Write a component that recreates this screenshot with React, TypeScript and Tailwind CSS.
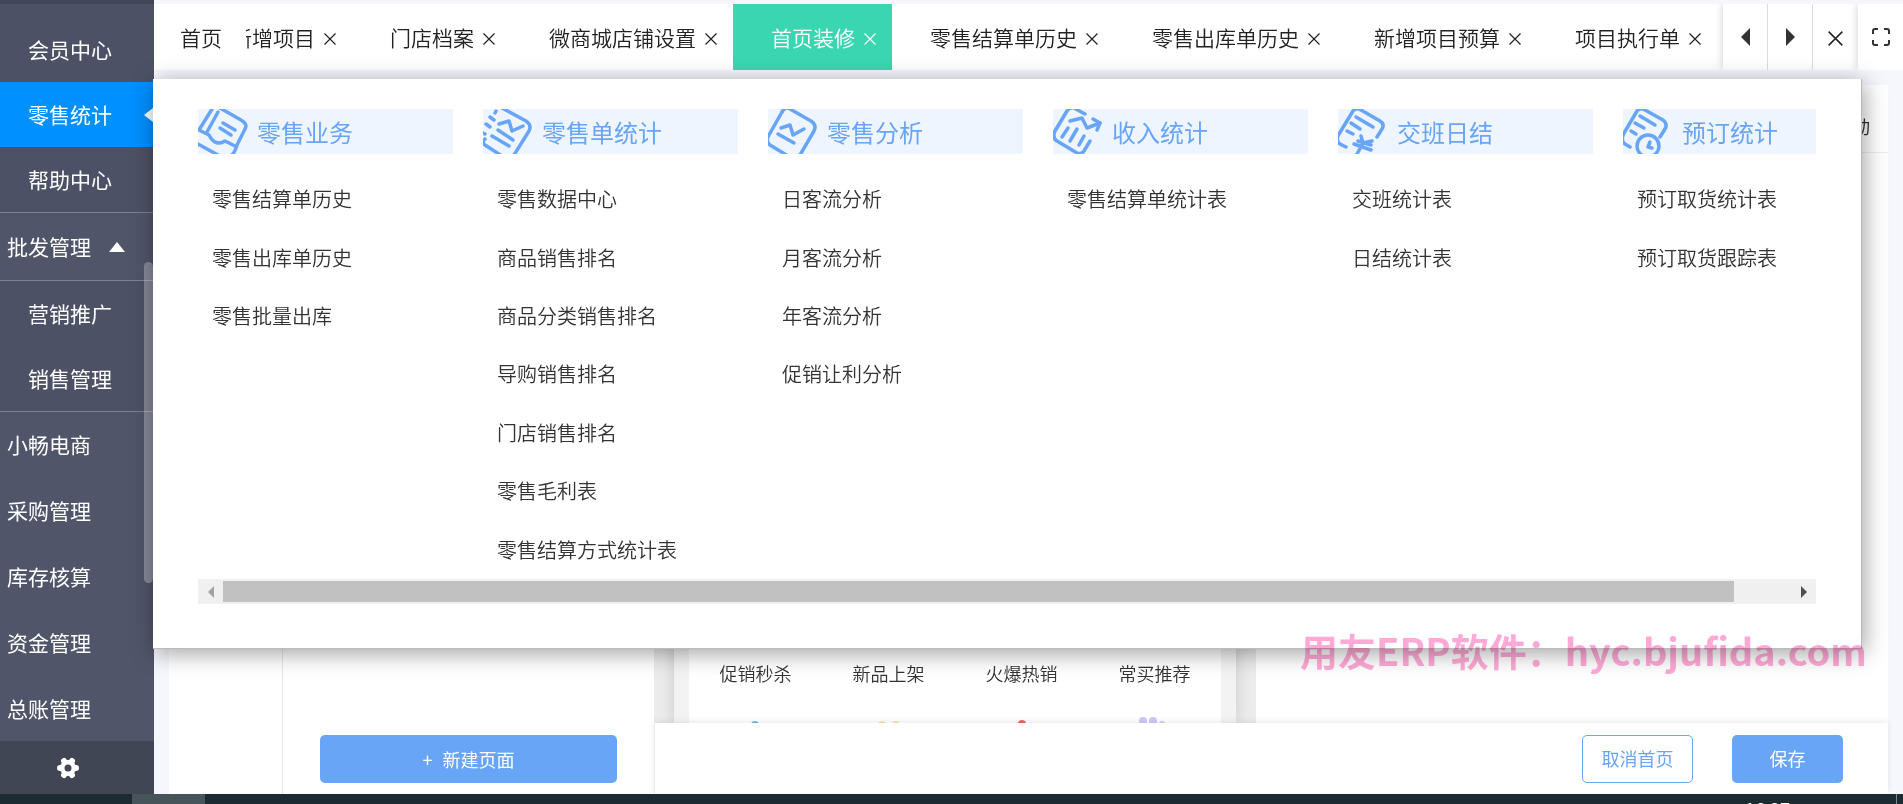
import type { ReactNode } from "react";

const FONT = "font-['Noto_Sans_CJK_SC','Liberation_Sans',sans-serif]";

interface MenuGroup {
    title: string;
    icon: ReactNode;
    items: string[];
}

// Group icons are drawn larger than the header band and clipped by it
const groups: MenuGroup[] = [
    {
        title: "零售业务",
        icon: (
            <>
                <path d="M14 0 L1 21 L11 26 C15 34 21 36 27 32 L37 37" />
                <path d="M22 -1 L43 11 Q50 15 47 20 L39 36 Q37 43 34 46" />
                <path d="M20 3 L9 23" />
                <path d="M0 35 L20 46" />
                <path d="M25 14 L37 21 M22 19 L33 26" />
            </>
        ),
        items: ["零售结算单历史", "零售出库单历史", "零售批量出库"],
    },
    {
        title: "零售单统计",
        icon: (
            <>
                <path d="M19 -1 L43 12 Q49 16 46 22 L31 46" />
                <path d="M13 2 L12 4 M7 8 L11 11 M3 15 L7 18" />
                <path d="M0 24 L2 25 M2 30 Q-2 33 2 36 L19 47" />
                <path d="M16 15 L26 12 L29 22 L40 17" />
                <path d="M15 21 L30 31 M9 27 L26 37" />
            </>
        ),
        items: [
            "零售数据中心",
            "商品销售排名",
            "商品分类销售排名",
            "导购销售排名",
            "门店销售排名",
            "零售毛利表",
            "零售结算方式统计表",
        ],
    },
    {
        title: "零售分析",
        icon: (
            <>
                <path d="M14 3 Q17 -3 22 0 L43 12 Q49 16 46 22 L32 46" />
                <path d="M14 3 L1 26 Q-3 32 2 36 L20 47" />
                <path d="M13 19 L22 16 L25 26 L36 20" />
                <path d="M10 25 L26 34" />
            </>
        ),
        items: ["日客流分析", "月客流分析", "年客流分析", "促销让利分析"],
    },
    {
        title: "收入统计",
        icon: (
            <>
                <path d="M32 5 L21 -1 Q17 -2 14 2 L2 22 Q-1 29 4 32 L24 44 Q28 46 31 42 L37 32" />
                <path d="M17 12 L29 9 L34 19 L47 14" />
                <path d="M40 10 L47 14 L44 21" />
                <path d="M15 19 L9 28 M24 20 L17 32 M31 27 L26 36" />
            </>
        ),
        items: ["零售结算单统计表"],
    },
    {
        title: "交班日结",
        icon: (
            <>
                <path d="M39 28 L44 20 Q47 15 42 12 L23 1 Q18 -2 15 2 L1 25 Q-3 31 2 35 L8 38" />
                <path d="M18 8 L35 18 M13 14 L22 20 M9 22 L15 25" />
                <path d="M23 27 L25 34 L34 32 M25 34 L19 45 M16 35 L33 41 M20 32 L33 36" />
            </>
        ),
        items: ["交班统计表", "日结统计表"],
    },
    {
        title: "预订统计",
        icon: (
            <>
                <path d="M37 28 L42 20 Q45 15 40 11 L22 1 Q17 -2 14 2 L1 24 Q-3 31 2 35 L7 38" />
                <path d="M17 7 L32 16 M12 14 L21 19 M8 22 L13 25" />
                <circle cx="25" cy="37" r="11" />
                <path d="M27 33 L25 38 L29 39" />
            </>
        ),
        items: ["预订取货统计表", "预订取货跟踪表"],
    },
];

const tabs = [
    "新增项目",
    "门店档案",
    "微商城店铺设置",
    "首页装修",
    "零售结算单历史",
    "零售出库单历史",
    "新增项目预算",
    "项目执行单",
];

const shopEntries = [
    { label: "促销秒杀", dots: <circle cx="35" cy="8" r="4" fill="#6fb9f5" /> },
    {
        label: "新品上架",
        dots: (
            <>
                <circle cx="29" cy="8" r="4" fill="#fbe7a8" />
                <circle cx="43" cy="8" r="4" fill="#fbe7a8" />
            </>
        ),
    },
    { label: "火爆热销", dots: <circle cx="36" cy="7" r="4" fill="#f2635f" /> },
    {
        label: "常买推荐",
        dots: (
            <>
                <circle cx="24" cy="4" r="4" fill="#d3c8f8" />
                <circle cx="34" cy="4" r="4" fill="#d3c8f8" />
                <circle cx="43" cy="7" r="3" fill="#d3c8f8" />
            </>
        ),
    },
];

function CrossIcon({ size }: { size: number }) {
    return (
        <svg width={size} height={size} viewBox="0 0 12 12" fill="none" stroke="currentColor" strokeWidth="1.2">
            <path d="M0.5 0.5 L11.5 11.5 M11.5 0.5 L0.5 11.5" />
        </svg>
    );
}

function SideItem({ label, kind }: { label: string; kind: "top" | "sub" | "active" }) {
    if (kind === "active") {
        return (
            <a href="#" className="relative flex h-[65px] items-center bg-[#0090ff] pl-7">
                {label}
                <span className="absolute right-px h-0 w-0 border-y-[7px] border-r-[9px] border-y-transparent border-r-white" />
            </a>
        );
    }
    return (
        <a href="#" className={kind === "sub" ? "flex h-[65px] items-center pl-7" : "flex h-[66px] items-center pl-[7px]"}>
            {label}
        </a>
    );
}

function Sidebar() {
    return (
        <aside className="relative flex w-[154px] shrink-0 flex-col bg-[#50556a] text-[21px] text-white">
            <div className="h-1 shrink-0 bg-[#45455a]" />
            <nav className="min-h-0 flex-1 overflow-hidden">
                <div className="border-b border-[#7d8194] bg-[#4d5165] pt-[13px]">
                    <SideItem label="会员中心" kind="sub" />
                    <SideItem label="零售统计" kind="active" />
                    <SideItem label="帮助中心" kind="sub" />
                </div>
                <a href="#" className="flex h-[68px] items-center border-b border-[#7d8194] pl-[7px]">
                    批发管理
                    <span className="ml-[18px] h-0 w-0 border-x-8 border-b-[10px] border-x-transparent border-b-white" />
                </a>
                <div className="border-b border-[#7d8194] bg-[#4d5165]">
                    <SideItem label="营销推广" kind="sub" />
                    <SideItem label="销售管理" kind="sub" />
                </div>
                {["小畅电商", "采购管理", "库存核算", "资金管理", "总账管理"].map((label) => (
                    <SideItem key={label} label={label} kind="top" />
                ))}
            </nav>
            <button aria-label="设置" className="flex h-[53px] shrink-0 items-center bg-[#414654] pl-[57px]">
                <svg width="22" height="22" viewBox="0 0 22 22">
                    <circle cx="11" cy="11" r="8" fill="#fff" />
                    <path
                        d="M3 11 H19 M7 4 L15 18 M15 4 L7 18"
                        stroke="#fff"
                        strokeWidth="6"
                        strokeLinecap="round"
                    />
                    <circle cx="11" cy="11" r="3.5" fill="#414654" />
                </svg>
            </button>
            {/* scroll thumb */}
            <div className="absolute top-[262px] right-px h-[321px] w-[9px] rounded-full bg-white/30" />
        </aside>
    );
}

function TabBar() {
    return (
        <div className="flex h-[66px] shrink-0 overflow-hidden bg-white text-[21px] font-[350] text-[#222]">
            <a href="#" className="flex shrink-0 items-center pt-0.5 pr-6 pl-[26px]">
                首页
            </a>
            <div className="flex min-w-0 flex-1 overflow-hidden">
                {tabs.map((tab, i) => (
                    <div
                        key={tab}
                        className={
                            tab === "首页装修"
                                ? "flex shrink-0 items-center gap-[9px] bg-[#3ad6b2] pt-0.5 pr-4 pl-[38px] text-white"
                                : i === 0
                                  ? "-ml-[53px] flex shrink-0 items-center gap-[9px] pt-0.5 pr-4 pl-[38px]"
                                  : "flex shrink-0 items-center gap-[9px] pt-0.5 pr-4 pl-[38px]"
                        }
                    >
                        <a href="#">{tab}</a>
                        <button aria-label={"关闭" + tab} className="pt-0.5">
                            <CrossIcon size={12} />
                        </button>
                    </div>
                ))}
            </div>
            <div className="z-10 flex shrink-0 bg-white shadow-[0_0_8px_rgba(0,0,0,0.2)]">
                <button aria-label="向左" className="flex w-[45px] items-center justify-center border-r border-[#ddd]">
                    <svg width="9" height="18" viewBox="0 0 9 18" fill="#333">
                        <path d="M9 0 V18 L0 9 Z" />
                    </svg>
                </button>
                <button aria-label="向右" className="flex w-[45px] items-center justify-center border-r border-[#ddd]">
                    <svg width="9" height="18" viewBox="0 0 9 18" fill="#333">
                        <path d="M0 0 V18 L9 9 Z" />
                    </svg>
                </button>
                <button aria-label="关闭全部" className="flex w-[45px] items-center justify-center pt-0.5">
                    <CrossIcon size={15} />
                </button>
                <button
                    aria-label="全屏"
                    className="flex w-[45px] items-center justify-center shadow-[0_0_8px_rgba(0,0,0,0.2)]"
                >
                    <svg width="18" height="18" viewBox="0 0 18 18" fill="none" stroke="#333" strokeWidth="2">
                        <path d="M1 6 V3 Q1 1 3 1 H6 M12 1 H15 Q17 1 17 3 V6 M17 12 V15 Q17 17 15 17 H12 M6 17 H3 Q1 17 1 15 V12" />
                    </svg>
                </button>
            </div>
        </div>
    );
}

function MegaMenu() {
    return (
        <div className="absolute top-[79px] right-[41px] -left-px z-20 border-r border-b border-[#bbb] bg-white px-[45px] pt-[30px] pb-11 shadow-[2px_4px_22px_rgba(0,0,0,0.38)]">
            <div className="flex gap-[30px] overflow-hidden">
                {groups.map((group) => (
                    <section key={group.title} className="w-[255px] shrink-0">
                        <h2 className="flex h-[45px] items-center gap-[9px] bg-[#eef5fe] text-[24px] text-[#68a5f7]">
                            <svg
                                width="50"
                                height="45"
                                viewBox="0 0 50 45"
                                fill="none"
                                stroke="#68a5f7"
                                strokeWidth="3.5"
                                strokeLinecap="round"
                                strokeLinejoin="round"
                            >
                                {group.icon}
                            </svg>
                            {group.title}
                        </h2>
                        <ul className="mt-4 grid h-[409px] grid-rows-7 pl-[14px] text-[20px] font-[350] text-[#333]">
                            {group.items.map((item) => (
                                <li key={item} className="flex items-center">
                                    <a href="#">{item}</a>
                                </li>
                            ))}
                        </ul>
                    </section>
                ))}
            </div>
            <div className="flex h-[25px] items-center bg-[#f0f0f0]">
                <button aria-label="向左滚动" className="flex w-[25px] justify-center">
                    <svg width="6" height="12" viewBox="0 0 6 12" fill="#a3a3a3">
                        <path d="M6 0 V12 L0 6 Z" />
                    </svg>
                </button>
                <div className="mr-[57px] h-[21px] flex-1 bg-[#c1c1c1]" />
                <button aria-label="向右滚动" className="flex w-[25px] justify-center">
                    <svg width="6" height="12" viewBox="0 0 6 12" fill="#505050">
                        <path d="M0 0 V12 L6 6 Z" />
                    </svg>
                </button>
            </div>
        </div>
    );
}

function PageEditor() {
    return (
        <div className="mx-[15px] mt-[15px] flex min-h-0 flex-1 flex-col bg-white">
            <div className="flex h-[68px] shrink-0 items-center justify-end border-b border-[#eee] pt-4 pr-[18px] text-[18px] text-[#333]">
                活动
            </div>
            <div className="flex min-h-0 flex-1">
                <div className="w-[114px] shrink-0 border-r border-[#e8e8e8]" />
                <div className="flex w-[371px] shrink-0 flex-col justify-end px-[37px] pb-[11px]">
                    <button className="flex h-12 items-center justify-center gap-[10px] rounded-[5px] bg-[#68a5f7] text-[18px] text-white">
                        <span>+</span>
                        <span>新建页面</span>
                    </button>
                </div>
                <div className="flex min-w-0 flex-1 flex-col">
                    <div className="flex min-h-0 flex-1">
                        <div className="w-[602px] shrink-0 overflow-hidden bg-[#ececec] px-5">
                            <div className="flex h-full flex-col justify-end border-x-[15px] border-[#f3f3f3] bg-white shadow-[0_0_15px_rgba(0,0,0,0.15)]">
                                <div className="grid grid-cols-4 text-[18px] font-[350] text-[#333]">
                                    {shopEntries.map((entry) => (
                                        <div key={entry.label} className="flex flex-col items-center gap-8">
                                            <span className="leading-6">{entry.label}</span>
                                            <svg width="72" height="6" viewBox="0 0 72 6">
                                                {entry.dots}
                                            </svg>
                                        </div>
                                    ))}
                                </div>
                            </div>
                        </div>
                    </div>
                    <div className="z-10 flex h-[71px] shrink-0 items-center justify-end gap-[39px] border-l border-[#e8e8e8] bg-white pr-[45px] text-[18px] shadow-[0_-2px_6px_rgba(0,0,0,0.08)]">
                        <button className="h-12 w-[111px] rounded-[5px] border border-[#68a5f7] text-[#68a5f7]">
                            取消首页
                        </button>
                        <button className="h-12 w-[111px] rounded-[5px] bg-[#68a5f7] text-white">保存</button>
                    </div>
                </div>
            </div>
        </div>
    );
}

export default function App() {
    return (
        <div className={`relative flex h-screen flex-col overflow-hidden bg-[#f5f7fc] ${FONT}`}>
            <div className="flex min-h-0 flex-1">
                <Sidebar />
                <main className="relative flex min-w-0 flex-1 flex-col pt-1">
                    <TabBar />
                    <PageEditor />
                    <MegaMenu />
                </main>
            </div>
            <div className="absolute right-9 bottom-[127px] z-30 text-[38px] leading-[54px] font-bold whitespace-nowrap text-[#ffa9d6] mix-blend-multiply">
                用友ERP软件：hyc.bjufida.com
            </div>
            <footer className="z-30 flex h-[10px] shrink-0 overflow-hidden bg-[#1b2b31] text-[18px] text-white">
                <div className="ml-[132px] w-[73px] bg-[#47555b]" />
                <span className="mt-0.5 mr-[106px] ml-auto leading-6">16:27</span>
                <div className="mr-[6px] w-px bg-[#7d878b]" />
            </footer>
        </div>
    );
}
